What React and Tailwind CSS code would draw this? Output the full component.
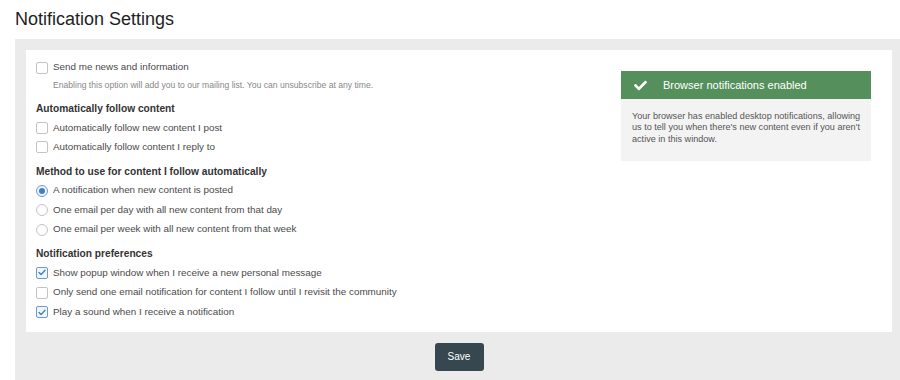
import React from "react";
import { FaCheck } from "react-icons/fa";

function Box({ checked }) {
  return (
    <span
      className={
        "flex h-[12px] w-[12px] shrink-0 items-center justify-center rounded-[2px] border " +
        (checked ? "border-[#6d9bd1] bg-[#f0f6fc]" : "border-[#c4c4c4] bg-white")
      }
    >
      {checked && (
        <svg width="8" height="7" viewBox="0 0 8 7" fill="none">
          <path d="M1 3.6 L3.1 5.6 L7 1.2" stroke="#3f7fc2" strokeWidth="1.4" strokeLinecap="round" strokeLinejoin="round" />
        </svg>
      )}
    </span>
  );
}

function Radio({ checked }) {
  return (
    <span
      className={
        "flex h-[12px] w-[12px] shrink-0 items-center justify-center rounded-full border " +
        (checked ? "border-[#6d9bd1] bg-[#eef5fc]" : "border-[#c4c4c4] bg-white")
      }
    >
      {checked && <span className="h-[6px] w-[6px] rounded-full bg-[#3f7fc2]" />}
    </span>
  );
}

function Row({ children, control }) {
  return (
    <div className="flex h-[19.6px] items-center gap-[5px] text-[9.85px] text-[#4a4a4a]">
      {control}
      <span className="whitespace-nowrap">{children}</span>
    </div>
  );
}

function Heading({ children, className }) {
  return (
    <div className={"h-[18px] text-[10.2px] font-bold leading-[18px] text-[#333] " + className}>
      {children}
    </div>
  );
}

export default function App() {
  return (
    <div className="w-[900px] bg-white font-['Liberation_Sans',Arial,sans-serif]">
      <div className="flex h-[39px] items-center pl-[15px] text-[18px] text-[#1e1e1e]">
        Notification Settings
      </div>
      <div className="ml-[15px] bg-[#ebebeb] pb-[14px] pl-[11px] pr-[8px] pt-[11px]">
        <div className="flex bg-white">
          <div className="flex-1 pb-[10px] pl-[10px] pt-[8px]">
            <Row control={<Box />}>Send me news and information</Row>
            <div className="mt-[1px] h-[12px] whitespace-nowrap pl-[17px] text-[8.6px] leading-[12px] text-[#888]">
              Enabling this option will add you to our mailing list. You can unsubscribe at any time.
            </div>
            <Heading className="mt-[9.5px]">Automatically follow content</Heading>
            <Row control={<Box />}>Automatically follow new content I post</Row>
            <Row control={<Box />}>Automatically follow content I reply to</Row>
            <Heading className="mt-[5.6px]">Method to use for content I follow automatically</Heading>
            <Row control={<Radio checked />}>A notification when new content is posted</Row>
            <Row control={<Radio />}>One email per day with all new content from that day</Row>
            <Row control={<Radio />}>One email per week with all new content from that week</Row>
            <Heading className="mt-[5.5px]">Notification preferences</Heading>
            <Row control={<Box checked />}>Show popup window when I receive a new personal message</Row>
            <Row control={<Box />}>Only send one email notification for content I follow until I revisit the community</Row>
            <Row control={<Box checked />}>Play a sound when I receive a notification</Row>
          </div>
          <div className="mr-[21px] mt-[21px] w-[250px] self-start">
            <div className="flex h-[28px] items-center bg-[#558f5c] pl-[12px] text-[11px] text-white">
              <FaCheck className="h-[13px] w-[15px] text-white" />
              <span className="ml-[15px]">Browser notifications enabled</span>
            </div>
            <div className="bg-[#f3f3f3] pb-[16px] pl-[11px] pr-[4px] pt-[12px] text-[9.1px] leading-[11.4px] text-[#555]">
              <div className="whitespace-nowrap">Your browser has enabled desktop notifications, allowing</div>
              <div className="whitespace-nowrap">us to tell you when there's new content even if you aren't</div>
              <div className="whitespace-nowrap">active in this window.</div>
            </div>
          </div>
        </div>
        <div className="mt-[11px] flex justify-center">
          <button className="h-[28px] w-[49px] rounded-[3px] bg-[#36474f] text-[10px] text-white">
            Save
          </button>
        </div>
        <div className="h-[20px]" />
      </div>
    </div>
  );
}
